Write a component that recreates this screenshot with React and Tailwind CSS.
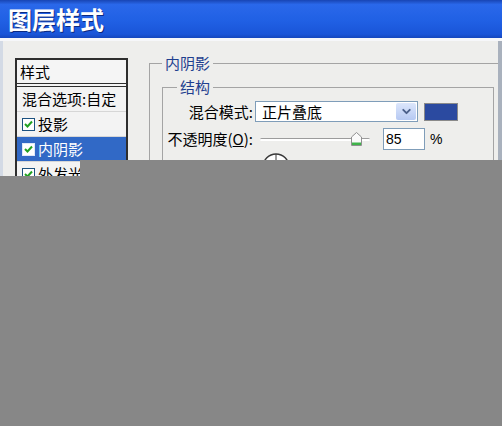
import { ChevronDown } from "lucide-react";

function Check({ selected }) {
  return (
    <span
      className={`flex h-[13px] w-[13px] items-center justify-center border bg-white ${
        selected ? "border-[#dfe8f7]" : "border-[#1c5180]"
      }`}
    >
      <svg width="9" height="8" viewBox="0 0 9 8">
        <path d="M1 4 L3.5 6.5 L8 1.5" fill="none" stroke="#21a121" strokeWidth="2" />
      </svg>
    </span>
  );
}

function StyleRow({ label, selected, checkbox = true }) {
  return (
    <div
      className={`flex h-[25px] items-center gap-[3px] border-b border-[#d6d6d6] pl-[5px] ${
        selected ? "bg-[#3169c6] text-white" : "bg-[#f3f3f3] text-black"
      }`}
    >
      {checkbox && <Check selected={selected} />}
      <span>{label}</span>
    </div>
  );
}

export default function App() {
  return (
    <div className="relative h-[426px] w-[502px] overflow-hidden bg-[#eeeeec] font-['Noto_Sans_CJK_SC','Noto_Sans',sans-serif] text-[15px] leading-[20px] text-black">
      <div className="flex h-[38px] items-center bg-[linear-gradient(to_bottom,#1845b4_0%,#2a68ea_12%,#2060e4_55%,#1a55d8_90%,#1547bd_100%)] pl-[8px]">
        <span className="text-[24px] font-bold leading-[30px] text-white [text-shadow:1px_1px_0_#0c2a80]">
          图层样式
        </span>
      </div>
      <div className="h-[3px] bg-[#f6f7fa]" />

      <div className="flex h-[385px] border-l-[3px] border-r-[4px] border-l-[#d3dae5] border-r-[#a9b1bd]">
        <div className="pl-[12px] pt-[17px]">
          <div className="w-[113px] border-x-2 border-t-2 border-[#2e2e2e]">
            <div className="flex h-[23px] items-center bg-[#f5f5f5] pl-[3px]">样式</div>
            <div className="h-[4px] border-y border-[#2e2e2e] bg-[#f5f5f5]" />
            <StyleRow label="混合选项:自定" checkbox={false} />
            <StyleRow label="投影" />
            <StyleRow label="内阴影" selected />
            <StyleRow label="外发光" />
            <StyleRow label="内发光" />
            <StyleRow label="斜面和浮雕" />
            <StyleRow label="光泽" />
          </div>
        </div>

        <fieldset className="ml-[21px] mt-[12px] w-[349px] border-l border-t border-[#a4a4a4] px-0 pb-0">
          <legend className="ml-[12px] px-[3px] text-[#1f3f8f]">内阴影</legend>
          <fieldset className="ml-[12px] mt-[4px] h-[200px] w-[332px] border border-[#a4a4a4] px-0">
            <legend className="ml-[14px] px-[3px] text-[#1f3f8f]">结构</legend>

            <div className="mt-[4px] flex h-[21px] items-center">
              <span className="w-[90px] text-right">混合模式:</span>
              <div className="ml-[2px] flex h-[21px] w-[163px] items-center justify-between border border-[#7f9db9] bg-white pl-[6px] pr-px">
                <span>正片叠底</span>
                <span className="flex h-[17px] w-[20px] items-center justify-center rounded-[2px] bg-[linear-gradient(to_bottom,#dce6fb,#b6c9f3)]">
                  <ChevronDown size={13} strokeWidth={3.5} className="text-[#4a5f8a]" />
                </span>
              </div>
              <span className="ml-[6px] h-[18px] w-[34px] border border-[#8a8a8a] bg-[#2b4aa0]" />
            </div>

            <div className="mt-[6px] flex h-[22px] items-center">
              <span className="w-[90px] whitespace-nowrap text-right">
                不透明度(<span className="underline">O</span>):
              </span>
              <div className="relative ml-[7px] h-[22px] w-[110px]">
                <div className="absolute left-0 right-0 top-[10px] h-[3px] rounded-full border-t border-[#9c9c9c] bg-white" />
                <svg className="absolute left-[91px] top-[4px]" width="11" height="14" viewBox="0 0 11 14">
                  <path d="M5.5 0.5 L10.5 5 V13.5 H0.5 V5 Z" fill="#fafafa" stroke="#8f8f8f" />
                  <rect x="1" y="10.5" width="9" height="2.5" fill="#3fb34a" />
                </svg>
              </div>
              <div className="ml-[13px] flex h-[22px] w-[42px] items-center border border-[#7f9db9] bg-white pl-[2px] font-['Liberation_Sans',sans-serif] text-[14px]">
                85
              </div>
              <span className="ml-[5px] font-['Liberation_Sans',sans-serif] text-[14px]">%</span>
            </div>

            <div className="ml-[99px] mt-[3px]">
              <svg width="28" height="28" viewBox="0 0 28 28">
                <circle cx="14" cy="14" r="13" fill="#ffffff" stroke="#3a3a3a" strokeWidth="1.5" />
                <line x1="14" y1="1" x2="14" y2="27" stroke="#3a3a3a" />
                <line x1="1" y1="14" x2="27" y2="14" stroke="#3a3a3a" />
              </svg>
            </div>
          </fieldset>
        </fieldset>
      </div>

      <div className="absolute bottom-0 left-[80px] right-0 top-[160px] bg-[#878787]" />
      <div className="absolute bottom-0 left-0 right-0 top-[176px] bg-[#878787]" />
    </div>
  );
}
